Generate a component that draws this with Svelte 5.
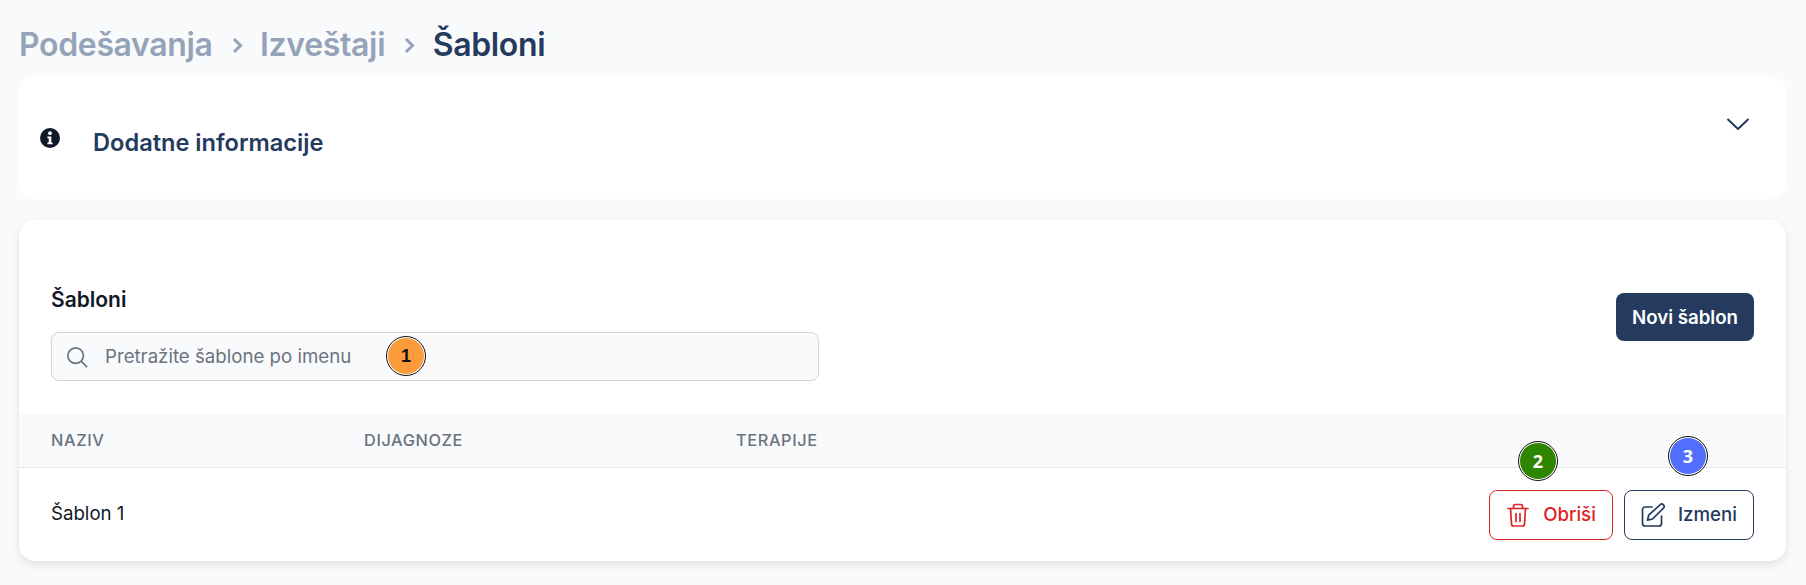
<script>
  let columns = ['Naziv', 'Dijagnoze', 'Terapije'];
</script>

<div class="page">
  <nav class="crumbs">
    <span class="muted">Podešavanja</span>
    <svg class="sep" viewBox="0 0 16 24" fill="none" stroke="currentColor" stroke-width="3"><path d="M4 6l6.5 6.5L4 19"/></svg>
    <span class="muted">Izveštaji</span>
    <svg class="sep" viewBox="0 0 16 24" fill="none" stroke="currentColor" stroke-width="3"><path d="M4 6l6.5 6.5L4 19"/></svg>
    <span class="current">Šabloni</span>
  </nav>

  <section class="info card">
    <svg class="info-icon" viewBox="0 0 20 20">
      <circle cx="10" cy="10" r="10" fill="#111827"/>
      <circle cx="10" cy="5.2" r="1.9" fill="#fff"/>
      <path d="M7.4 8.4h3.9v6h1.3v1.8H7.4v-1.8h1.3v-4.200H7.400z" fill="#fff"/>
    </svg>
    <h2>Dodatne informacije</h2>
    <svg class="chevron" viewBox="0 0 24 12" fill="none" stroke="#243a5e" stroke-width="2"><path d="M1.500 1l10.500 10L22.500 1"/></svg>
  </section>

  <section class="list card">
    <div class="toolbar">
      <div class="search-box">
        <span class="label">Šabloni</span>
        <div class="search">
          <svg viewBox="0 0 24 24" fill="none" stroke="#6b7280" stroke-width="1.800"><circle cx="10.500" cy="10.500" r="8.500"/><path d="M17 17l6 6"/></svg>
          <span class="placeholder">Pretražite šablone po imenu</span>
          <span class="badge orange">1</span>
        </div>
      </div>
      <button class="primary">Novi šablon</button>
    </div>

    <div class="row head">
      {#each columns as col}
        <span>{col}</span>
      {/each}
    </div>

    <div class="row body">
      <span class="name">Šablon 1</span>
      <span></span>
      <span></span>
      <div class="actions">
        <button class="outline danger">
          <svg viewBox="0 0 24 24" fill="none" stroke="currentColor" stroke-width="1.700" stroke-linecap="round" stroke-linejoin="round"><path d="M2 5.500h20M7.500 5.500V3.500A2 2 0 0 1 9.500 1.500h5a2 2 0 0 1 2 2v2M4.500 5.500l1 15.500a2 2 0 0 0 2 2h9a2 2 0 0 0 2-2l1-15.500M10 10.500v8M14 10.500v8"/></svg>
          Obriši
          <span class="badge green">2</span>
        </button>
        <button class="outline navy">
          <svg viewBox="0 0 24 24" fill="none" stroke="currentColor" stroke-width="1.700" stroke-linecap="round" stroke-linejoin="round"><path d="M11 4H4a2.500 2.500 0 0 0-2.500 2.500v14A2.500 2.500 0 0 0 4 23h14a2.500 2.500 0 0 0 2.500-2.500V13"/><path d="M19 1.800a2.400 2.400 0 0 1 3.400 3.400L11.500 16l-5 1.200 1.200-5z"/></svg>
          Izmeni
          <span class="badge blue">3</span>
        </button>
      </div>
    </div>
  </section>
</div>

<style>
  :global(body) {
    margin: 0;
    background: #f9fafb;
    font-family: Inter, "Liberation Sans", sans-serif;
  }

  .page {
    height: 585px;
    box-sizing: border-box;
    padding: 25px 20px 0 19px;
    overflow: hidden;
  }

  .crumbs {
    display: flex;
    align-items: center;
    height: 40px;
    margin-bottom: 11px;
    font-size: 32px;
    font-weight: 600;
    line-height: 40px;
    letter-spacing: -0.350px;
  }
  .muted { color: #94a3b8; }
  .current { color: #243a5e; }
  .sep {
    width: 16px;
    height: 24px;
    margin: 0 14.500px 0 17px;
    color: #94a3b8;
  }

  .card {
    background: #fff;
    border-radius: 16px;
  }

  .info {
    display: flex;
    align-items: flex-start;
    height: 123px;
    box-sizing: border-box;
    padding: 0 36px 0 21px;
    margin-bottom: 21px;
  }
  .info-icon {
    width: 20px;
    height: 20px;
    margin: 52px 0 0 0;
  }
  .info h2 {
    margin: 47px 0 0 33px;
    flex: 1;
    font-size: 23.600px;
    line-height: 40px;
    font-weight: 600;
    color: #243a5e;
  }
  .chevron {
    width: 24px;
    height: 12px;
    margin: 42px 0 0;
  }

  .list {
    height: 341px;
    box-shadow: 0 4px 8px rgba(0, 0, 0, 0.1);
  }

  .toolbar {
    display: flex;
    align-items: flex-end;
    justify-content: space-between;
    height: 194px;
    box-sizing: border-box;
    padding: 0 32px 33px;
  }
  .search-box { display: flex; flex-direction: column; }
  .label {
    font-size: 21px;
    font-weight: 600;
    line-height: 28px;
    color: #111827;
    margin-bottom: 18px;
  }
  .search {
    position: relative;
    display: flex;
    align-items: center;
    width: 768px;
    height: 49px;
    box-sizing: border-box;
    padding: 0 14px;
    background: #f9fafb;
    border: 1px solid #d1d5db;
    border-radius: 8px;
  }
  .search svg { width: 22px; height: 22px; flex: none; }
  .placeholder {
    margin-left: 17px;
    font-size: 18.670px;
    color: #6b7280;
  }

  .primary {
    width: 138px;
    height: 48px;
    margin-bottom: 40px;
    border: none;
    border-radius: 8px;
    background: #243a5e;
    color: #fff;
    font: 600 18.670px Inter, sans-serif;
  }

  .row {
    display: grid;
    grid-template-columns: 313px 372px 1fr auto;
    align-items: center;
    padding: 0 32px;
  }
  .head {
    height: 53px;
    background: #f9fafb;
    border-bottom: 1px solid #e5e7eb;
    font-size: 16.330px;
    font-weight: 500;
    letter-spacing: 0.600px;
    text-transform: uppercase;
    color: #6b7280;
  }
  .head span { position: relative; top: -1px; }
  .body { height: 93px; }
  .name { font-size: 18.670px; color: #111827; margin-top: -2px; }

  .actions { display: flex; gap: 11px; }
  .outline {
    position: relative;
    display: flex;
    align-items: center;
    justify-content: center;
    gap: 13px;
    height: 50px;
    box-sizing: border-box;
    background: #fff;
    border-radius: 8px;
    font: 500 18.670px Inter, sans-serif;
  }
  .outline svg { width: 24px; height: 24px; }
  .danger { width: 124px; border: 1px solid #e02424; color: #e02424; }
  .navy { width: 130px; border: 1px solid #243a5e; color: #243a5e; }

  .badge {
    position: absolute;
    display: flex;
    align-items: center;
    justify-content: center;
    width: 38px;
    height: 38px;
    box-sizing: border-box;
    border-radius: 50%;
    border: 1.500px solid #fff;
    outline: 1.500px solid #111;
    outline-offset: -0.500px;
    font: 700 18px "Noto Sans", sans-serif;
  }
  .orange {
    left: 335px;
    top: 4px;
    background: #fb9b3c;
    color: #111;
    font-family: "Liberation Sans", sans-serif;
  }
  .green {
    left: 29px;
    top: -49px;
    background: #2e8500;
    color: #fff;
  }
  .blue {
    left: 44px;
    top: -54px;
    background: #4f6ffc;
    color: #fff;
  }
</style>
